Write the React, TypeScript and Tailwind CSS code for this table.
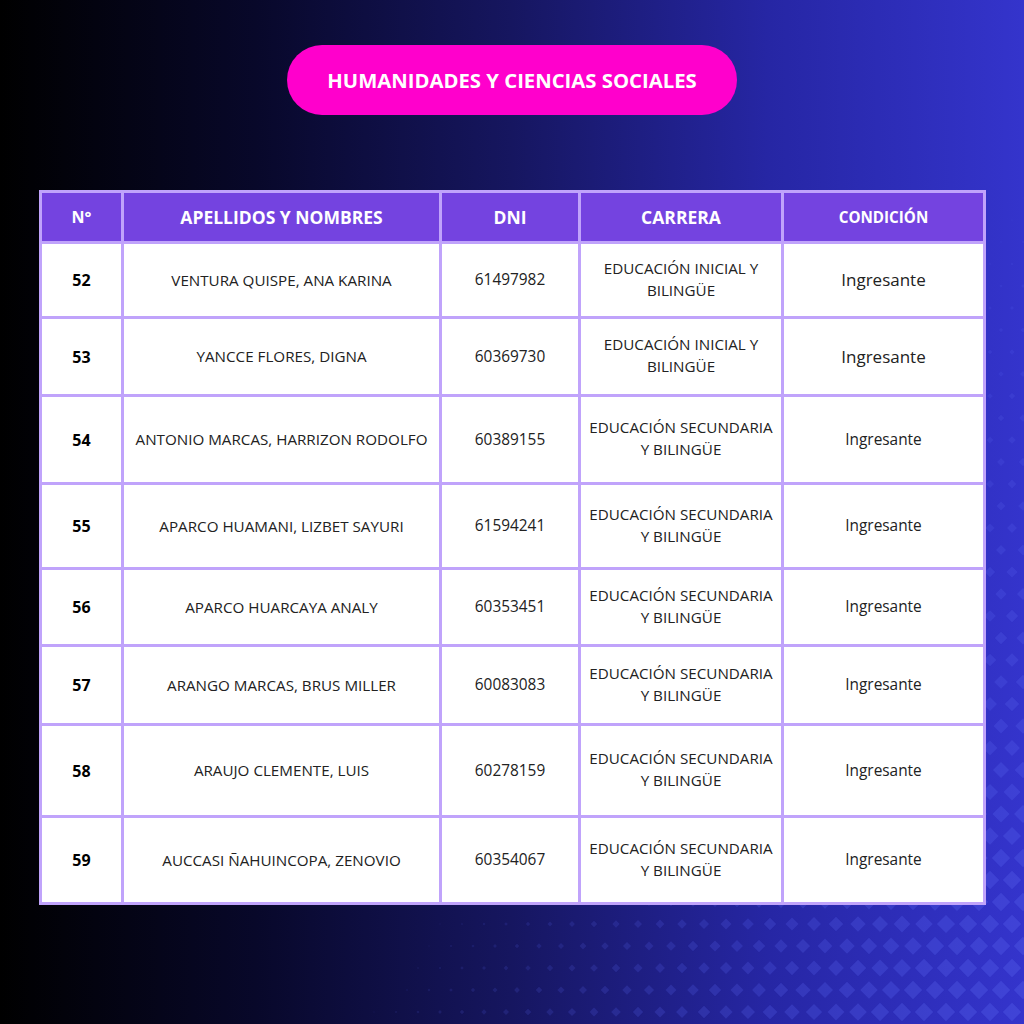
import React from 'react';

type Row = {
  n: number;
  name: string;
  dni: string;
  carrera: [string, string];
  h: string;
  big?: boolean;
};

const rows: Row[] = [
  { n: 52, name: 'VENTURA QUISPE, ANA KARINA', dni: '61497982', carrera: ['EDUCACIÓN INICIAL Y', 'BILINGÜE'], h: 'h-[72px]', big: true },
  { n: 53, name: 'YANCCE FLORES, DIGNA', dni: '60369730', carrera: ['EDUCACIÓN INICIAL Y', 'BILINGÜE'], h: 'h-[75px]', big: true },
  { n: 54, name: 'ANTONIO MARCAS, HARRIZON RODOLFO', dni: '60389155', carrera: ['EDUCACIÓN SECUNDARIA', 'Y BILINGÜE'], h: 'h-[85px]' },
  { n: 55, name: 'APARCO HUAMANI, LIZBET SAYURI', dni: '61594241', carrera: ['EDUCACIÓN SECUNDARIA', 'Y BILINGÜE'], h: 'h-[82px]' },
  { n: 56, name: 'APARCO HUARCAYA ANALY', dni: '60353451', carrera: ['EDUCACIÓN SECUNDARIA', 'Y BILINGÜE'], h: 'h-[74px]' },
  { n: 57, name: 'ARANGO MARCAS, BRUS MILLER', dni: '60083083', carrera: ['EDUCACIÓN SECUNDARIA', 'Y BILINGÜE'], h: 'h-[76px]' },
  { n: 58, name: 'ARAUJO CLEMENTE, LUIS', dni: '60278159', carrera: ['EDUCACIÓN SECUNDARIA', 'Y BILINGÜE'], h: 'h-[89px]' },
  { n: 59, name: 'AUCCASI ÑAHUINCOPA, ZENOVIO', dni: '60354067', carrera: ['EDUCACIÓN SECUNDARIA', 'Y BILINGÜE'], h: 'h-[84px]' },
];

// decorative diamond grid, growing toward the bottom-right corner
const Diamonds = () => {
  const items: React.ReactNode[] = [];
  const step = 22;
  for (let y = 0; y < 1100; y += step) {
    for (let x = 0; x < 1100; x += step) {
      const px = x + ((y / step) % 2 ? step / 2 : 0);
      const t = (px / 1024) * 1.0 + (y / 1024) * 0.8 - 1.15;
      if (t <= 0) continue;
      const s = Math.min(13, t * 24 + 1);
      items.push(
        <rect
          key={`${x}-${y}`}
          x={px - s / 2}
          y={y - s / 2}
          width={s}
          height={s}
          transform={`rotate(45 ${px} ${y})`}
          fill="#5a66f0"
          opacity={Math.min(0.32, 0.12 + t * 0.35)}
        />
      );
    }
  }
  return (
    <svg className="absolute inset-0 pointer-events-none" width="1024" height="1024" viewBox="0 0 1024 1024">
      {items}
    </svg>
  );
};

const cell = 'bg-white flex items-center justify-center text-center text-[#222]';
const head = 'bg-[#7443e0] h-[48px] flex items-center justify-center text-white font-bold';

export default function App() {
  return (
    <div
      className="relative w-[1024px] h-[1024px] overflow-hidden bg-[linear-gradient(to_right,#000000_0%,#08082a_25%,#161660_50%,#2626a4_75%,#3434cc_100%)]"
      style={{ fontFamily: '"Open Sans", "Liberation Sans", sans-serif' }}
    >
      <Diamonds />

      <div className="relative flex flex-col items-center pt-[45px]">
        <div className="w-[450px] h-[70px] rounded-full bg-[#ff00cc] flex items-center justify-center text-white font-bold text-[20.3px]">
          HUMANIDADES Y CIENCIAS SOCIALES
        </div>

        <div className="mt-[75px] ml-[1px] bg-[#c0a3fb] p-[3px] grid grid-cols-[79px_315px_136px_200px_199px] gap-[3px]">
          <div className={`${head} text-[16px]`}>N°</div>
          <div className={`${head} text-[17.5px]`}>APELLIDOS Y NOMBRES</div>
          <div className={`${head} text-[17.5px]`}>DNI</div>
          <div className={`${head} text-[17.5px]`}>CARRERA</div>
          <div className={`${head} text-[15.2px]`}>CONDICIÓN</div>

          {rows.map((r) => (
            <React.Fragment key={r.n}>
              <div className={`${cell} ${r.h} font-bold text-[16px] text-black`}>{r.n}</div>
              <div className={`${cell} ${r.h} text-[15.2px]`}>{r.name}</div>
              <div className={`${cell} ${r.h} text-[15.4px]`}>{r.dni}</div>
              <div className={`${cell} ${r.h} flex-col text-[15.2px] leading-[22px] pb-[3px]`}>
                <span>{r.carrera[0]}</span>
                <span>{r.carrera[1]}</span>
              </div>
              <div className={`${cell} ${r.h} ${r.big ? 'text-[17px]' : 'text-[15.4px]'}`}>Ingresante</div>
            </React.Fragment>
          ))}
        </div>
      </div>
    </div>
  );
}
